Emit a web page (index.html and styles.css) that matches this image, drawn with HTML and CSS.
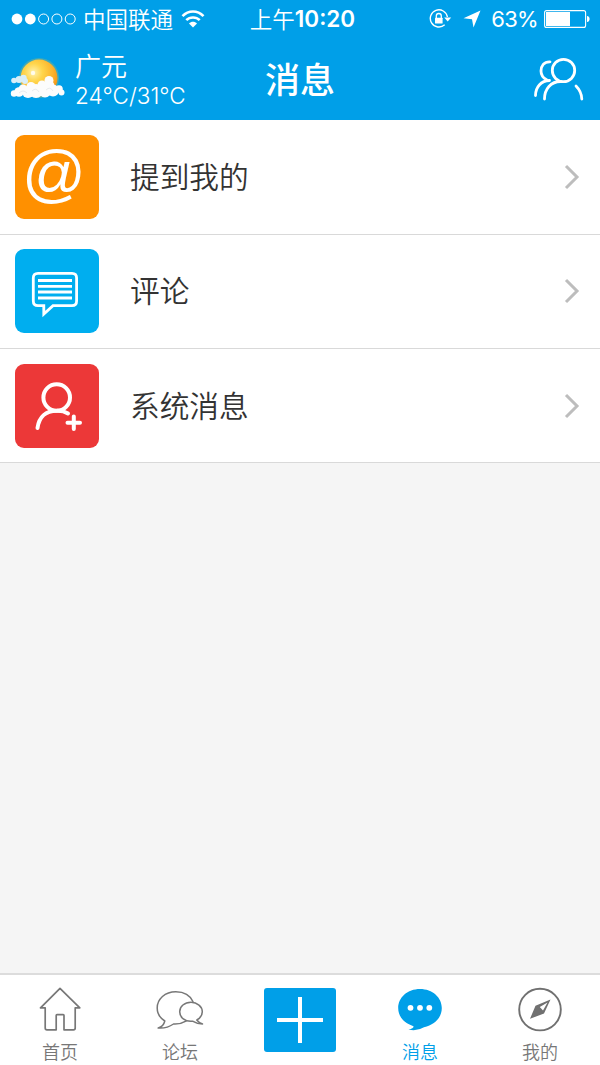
FILE: index.html
```html
<!DOCTYPE html>
<html lang="zh-CN">

<head>
    <meta charset="UTF-8">
    <meta name="viewport" content="width=device-width, initial-scale=1.0">
    <title>消息</title>
    <link rel="stylesheet" href="styles.css">
</head>

<body>
    <header class="header">
        <div class="status-bar">
            <div class="status-left">
                <svg class="signal" width="66" height="12" viewBox="0 0 66 12">
                    <circle cx="6" cy="6" r="5.4" fill="#fff" />
                    <circle cx="19.3" cy="6" r="5.4" fill="#fff" />
                    <g fill="none" stroke="#fff">
                        <circle cx="32.6" cy="6" r="5" />
                        <circle cx="45.9" cy="6" r="5" />
                        <circle cx="59.2" cy="6" r="5" />
                    </g>
                </svg>
                <span class="carrier">中国联通</span>
                <svg class="wifi" width="24" height="18" viewBox="0 0 24 18">
                    <g fill="none" stroke="#fff" stroke-width="2.6">
                        <path d="M1.5 6.2C7.5 0 16.5 0 22.5 6.2" />
                        <path d="M5.3 10.2C9 6.5 15 6.5 18.7 10.2" />
                    </g>
                    <path d="M12 17.5L8 13.4C10.2 11.3 13.8 11.3 16 13.4Z" fill="#fff" />
                </svg>
            </div>
            <div class="time"><span>上午</span><b>10:20</b></div>
            <div class="status-right">
                <svg class="lock" width="23" height="20" viewBox="0 0 23 20">
                    <path d="M15.7 15.8A8.6 8.6 0 1 1 18.4 8" fill="none" stroke="#fff" stroke-width="1.4" />
                    <path d="M15.2 8.5H22.2L18.7 12.5Z" fill="#fff" />
                    <rect x="6" y="8.7" width="7.6" height="5.8" rx="0.5" fill="#fff" />
                    <path d="M7.3 9V7A2.5 2.5 0 0 1 12.3 7V9" fill="none" stroke="#fff" stroke-width="1.3" />
                </svg>
                <svg class="location" width="18" height="18" viewBox="0 0 18 18">
                    <path d="M17.5 0.5L10.5 17.5L9 9.3L0.5 8.2Z" fill="#fff" />
                </svg>
                <span class="percent">63%</span>
                <svg class="battery" width="46" height="18" viewBox="0 0 46 18">
                    <rect x="0.6" y="0.6" width="41" height="16.8" rx="2" fill="none" stroke="#fff" stroke-width="1.1" />
                    <rect x="2" y="2" width="24" height="14" fill="#fff" />
                    <path d="M43 6C46.5 6 46.5 12 43 12Z" fill="#fff" />
                </svg>
            </div>
        </div>
        <div class="nav">
            <div class="weather">
                <svg class="weather-icon" width="56" height="50" viewBox="0 0 56 50">
                    <defs>
                        <radialGradient id="sun" cx="0.35" cy="0.35" r="0.7">
                            <stop offset="0" stop-color="#fff2ae" />
                            <stop offset="0.35" stop-color="#ffd54b" />
                            <stop offset="0.75" stop-color="#fcb32c" />
                            <stop offset="1" stop-color="#f29619" />
                        </radialGradient>
                    </defs>
                    <circle cx="29" cy="23" r="20" fill="#b9b95a" opacity="0.35" />
                    <circle cx="29" cy="23" r="18.5" fill="url(#sun)" />
                    <circle cx="23" cy="18" r="2.2" fill="#fff" opacity="0.8" />
                    <g fill="#d9eef8">
                        <circle cx="4" cy="25.5" r="2.8" />
                        <circle cx="9" cy="24.5" r="3.5" />
                        <circle cx="13.5" cy="23" r="3.2" />
                        <circle cx="15" cy="26" r="3" />
                    </g>
                    <g fill="#fcfcfc">
                        <circle cx="4" cy="38.5" r="3.2" />
                        <circle cx="9" cy="37" r="4.8" />
                        <circle cx="13" cy="34" r="4.5" />
                        <circle cx="18" cy="37" r="6" />
                        <circle cx="21" cy="31.500" r="4.500" />
                        <circle cx="26" cy="36" r="7" />
                        <circle cx="32" cy="30" r="4.500" />
                        <circle cx="35" cy="36" r="6.500" />
                        <circle cx="39" cy="25.500" r="4.500" />
                        <circle cx="39" cy="31" r="5.500" />
                        <circle cx="43" cy="35.500" r="6" />
                        <circle cx="49" cy="34" r="3.800" />
                        <circle cx="51.500" cy="37.500" r="3" />
                    </g>
                    <path d="M9 38Q13 34 17 38M22 36Q26 32 29 37M36 35Q40 31 43 36" fill="none" stroke="#e9ecee" />
                </svg>
                <div class="weather-text">
                    <div class="city">广元</div>
                    <div class="temp">24℃/31℃</div>
                </div>
            </div>
            <h1 class="title">消息</h1>
            <svg class="contacts" width="52" height="46" viewBox="0 0 52 46">
                <g fill="none" stroke="#fff" stroke-width="2.8" stroke-linecap="round">
                    <circle cx="31.5" cy="13.5" r="11.2" />
                    <path d="M12.5 42C12.5 32 19 24.5 28.5 24.5" />
                    <path d="M44 29Q49.5 34.5 49.8 42" />
                    <path d="M18 4.8C12 4.5 9 9 9 14C9 18.5 12 21.5 15 23" />
                    <path d="M17.5 23.5C9 23.5 3.5 30.5 3.5 38.5" />
                </g>
            </svg>
        </div>
    </header>

    <ul class="message-list">
        <li class="message-item">
            <span class="item-icon orange">@</span>
            <span class="item-name">提到我的</span>
            <svg class="arrow" width="16" height="26" viewBox="0 0 16 26"><path d="M2 2L13 13L2 24" /></svg>
        </li>
        <li class="message-item">
            <span class="item-icon blue">
                <svg width="84" height="84" viewBox="0 0 84 84" fill="none" stroke="#fff" stroke-width="2.8">
                    <path d="M23 24.3H57Q61.6 24.3 61.6 29V52Q61.6 56.7 57 56.7H38L28.8 65V56.7H23Q18.3 56.7 18.3 52V29Q18.3 24.3 23 24.3Z" />
                    <path d="M23 31.5H57M23 37.3H57M23 43H57M23 49H57" />
                </svg>
            </span>
            <span class="item-name">评论</span>
            <svg class="arrow" width="16" height="26" viewBox="0 0 16 26"><path d="M2 2L13 13L2 24" /></svg>
        </li>
        <li class="message-item">
            <span class="item-icon red">
                <svg width="84" height="84" viewBox="0 0 84 84" fill="none" stroke="#fff" stroke-width="4" stroke-linecap="round">
                    <circle cx="41.7" cy="33.5" r="13.3" />
                    <path d="M22.5 64C24 53 31 46.8 41.7 46.8Q48 46.5 53 49.5" />
                    <path d="M52.5 58.7H65M58.8 52.5V65" />
                </svg>
            </span>
            <span class="item-name">系统消息</span>
            <svg class="arrow" width="16" height="26" viewBox="0 0 16 26"><path d="M2 2L13 13L2 24" /></svg>
        </li>
    </ul>

    <nav class="tab-bar">
        <a class="tab">
            <svg class="tab-icon" width="50" height="50" viewBox="0 0 50 50" fill="none" stroke="#777" stroke-width="1.7" stroke-linejoin="round">
                <path d="M25 6.3L5.5 25.8H10.2V46Q10.2 47.8 12 47.8H21.2V33.5Q21.2 32.7 22 32.7H28.2Q29 32.7 29 33.5V47.8H38.5Q40.2 47.8 40.2 46V25.8H44.8Z" />
            </svg>
            <span>首页</span>
        </a>
        <a class="tab">
            <svg class="tab-icon" width="50" height="50" viewBox="0 0 50 50" fill="none" stroke="#777" stroke-width="1.5" stroke-linejoin="round">
                <path d="M38.2 20C35.5 14 29.5 9.8 20.8 9.8C10 9.800 2.2 17 2.2 26C2.2 31.5 5 36 9.8 39Q8.5 44.5 3.2 46Q11.5 46.8 18.5 42Q25 42.5 31.5 38.8" />
                <path d="M41.8 38C45.5 36 47.3 33 47.3 29.7C47.3 24.5 42.2 20.3 36 20.3C29.5 20.3 24.7 24.500 24.7 29.7C24.7 35.5 30 40 37.5 39.2Q42 42 47.5 42Q43.5 40.5 41.8 38Z" />
            </svg>
            <span>论坛</span>
        </a>
        <a class="tab">
            <span class="add-button">
                <svg width="72" height="64" viewBox="0 0 72 64"><path d="M13 32H59M36 9V55" stroke="#fff" stroke-width="4" /></svg>
            </span>
        </a>
        <a class="tab active">
            <svg class="tab-icon" width="50" height="50" viewBox="0 0 50 50">
                <path d="M25 7C12.500 7 3.2 15.5 3.2 26C3.2 34 8.5 41 18.5 44.2Q19 46.5 13.5 47.5Q22 49.5 29 45.2C40 42.5 46.8 35.5 46.8 26C46.8 15.5 37.5 7 25 7Z" fill="#009fe8" />
                <circle cx="15.5" cy="25.8" r="2.9" fill="#fff" />
                <circle cx="25" cy="25.8" r="2.9" fill="#fff" />
                <circle cx="34.3" cy="25.8" r="2.9" fill="#fff" />
            </svg>
            <span>消息</span>
        </a>
        <a class="tab">
            <svg class="tab-icon" width="50" height="50" viewBox="0 0 50 50">
                <circle cx="25" cy="27.6" r="20.8" fill="none" stroke="#707070" stroke-width="1.9" />
                <path fill-rule="evenodd" d="M35.5 17.5L29 31.5L15 36.8L20.5 23.8ZM32.5 20.5L24.8 25L28 28.6Z" fill="#707070" />
            </svg>
            <span>我的</span>
        </a>
    </nav>
</body>

</html>
```

FILE: styles.css
```css
* {
    box-sizing: border-box;
}

body {
    margin: 0;
    height: 1065px;
    display: flex;
    flex-direction: column;
    font-family: "Noto Sans CJK SC", sans-serif;
    background-color: #f5f5f5;
    overflow: hidden;
}

svg {
    display: block;
    flex-shrink: 0;
}

.header {
    height: 120px;
    background-color: #009fe8;
    color: #fff;
}

.status-bar {
    height: 40px;
    display: grid;
    grid-template-columns: 1fr auto 1fr;
    align-items: center;
    padding: 0 10px 2px 11px;
    font-size: 22.5px;
    font-weight: 350;
    line-height: 34px;
}

.status-left,
.status-right,
.time {
    display: flex;
    align-items: center;
}

.status-right {
    justify-content: flex-end;
}

.carrier {
    margin: 0 8px 0 6px;
    padding-bottom: 2px;
}

.time {
    padding-left: 4px;
    font-size: 22.5px;
}

.time span {
    padding-bottom: 2px;
}

.time b {
    font-family: Inter, sans-serif;
    font-size: 22.5px;
    font-weight: 600;
}

.lock {
    margin-right: 1px;
}

.location {
    margin: 0 10px;
}

.percent {
    margin-right: 6px;
    font-family: Inter, sans-serif;
    font-size: 22px;
    font-weight: 400;
    letter-spacing: -0.7px;
}

.nav {
    height: 80px;
    display: grid;
    grid-template-columns: 1fr auto 1fr;
    align-items: center;
    padding: 0 16px 0 10px;
}

.weather {
    display: flex;
    align-items: center;
}

.weather-text {
    margin-left: 9px;
    font-weight: 350;
}

.city {
    padding-bottom: 3px;
    font-size: 26px;
    line-height: 27px;
}

.temp {
    font-family: Inter, "Noto Sans CJK SC", sans-serif;
    font-size: 22.5px;
    line-height: 29px;
}

.title {
    margin: 0;
    padding: 0 0 5px 6px;
    font-size: 35px;
    font-weight: 500;
    line-height: 75px;
}

.contacts {
    justify-self: end;
}

.message-list {
    margin: 0;
    padding: 0.4px 0 0;
    list-style: none;
    background-color: #fff;
}

.message-item {
    height: 114.3px;
    display: flex;
    align-items: center;
    padding: 0 20px 0 15px;
    border-bottom: 1px solid #d9d9d9;
}

.item-icon {
    width: 84px;
    height: 84px;
    border-radius: 9px;
    color: #fff;
}

.orange {
    padding-right: 6px;
    background-color: #ff9000;
    font-family: "Liberation Sans", sans-serif;
    font-size: 63px;
    line-height: 76px;
    text-align: center;
}

.blue {
    background-color: #00aeef;
}

.red {
    background-color: #ec3838;
}

.item-name {
    flex: 1;
    margin-left: 31px;
    padding-bottom: 2px;
    color: #333;
    font-size: 29.7px;
    font-weight: 350;
    line-height: 40px;
}

.arrow path {
    fill: none;
    stroke: #bdbdbd;
    stroke-width: 3;
}

.tab-bar {
    height: 92px;
    margin-top: auto;
    display: flex;
    border-top: 2px solid #dcdcdc;
    background-color: #fff;
}

.tab {
    flex: 1;
    display: flex;
    flex-direction: column;
    align-items: center;
    padding-top: 7px;
    color: #777;
    font-size: 18px;
    font-weight: 350;
    line-height: 26px;
}

.tab .tab-icon {
    margin-bottom: 6px;
}

.active {
    color: #009fe8;
}

.add-button {
    margin-top: 6px;
    border-radius: 3px;
    background-color: #009fe8;
}
```
